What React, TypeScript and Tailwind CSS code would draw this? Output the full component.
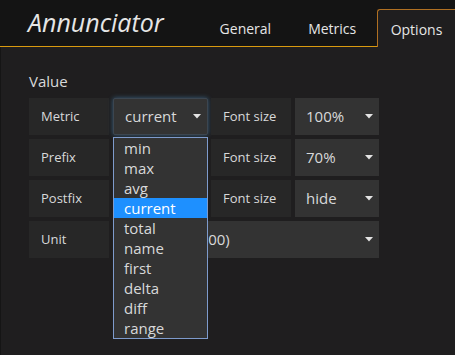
import React from 'react';

const options = ['min', 'max', 'avg', 'current', 'total', 'name', 'first', 'delta', 'diff', 'range'];

function Caret() {
  return (
    <svg width="8" height="5" viewBox="0 0 8 5" className="shrink-0">
      <path d="M0 0 L8 0 L4 4.5 Z" fill="#e4e4e4" />
    </svg>
  );
}

function Label({ text }: { text: string }) {
  return (
    <div className="flex h-full w-[80px] shrink-0 items-center bg-[#272727] pl-[12px] text-[13px] text-[#d8d9da]">
      {text}
    </div>
  );
}

function Select({
  value,
  width,
  focused = false,
}: {
  value: string;
  width: string;
  focused?: boolean;
}) {
  return (
    <div
      className={`flex h-full shrink-0 items-center justify-between bg-[#333333] pl-[11px] pr-[6px] text-[15px] text-[#d8d9da] ${width} ${
        focused ? 'rounded-[2px] border border-[#3c4650] shadow-[0_0_5px_rgba(82,168,236,0.45)]' : ''
      }`}
    >
      <span>{value}</span>
      <Caret />
    </div>
  );
}

function Row({ label, value, size, focused }: { label: string; value: string; size: string; focused?: boolean }) {
  return (
    <div className="flex h-[37px] gap-[4px]">
      <Label text={label} />
      <div className="flex h-full gap-[3px]">
        <Select value={value} width="w-[95px]" focused={focused} />
        <Label text="Font size" />
      </div>
      <Select value={size} width="w-[84px]" />
    </div>
  );
}

export default function App() {
  return (
    <div
      className="relative h-[355px] w-[455px] overflow-hidden bg-[#1f1e1f]"
      style={{ fontFamily: '"Open Sans", "Noto Sans", sans-serif' }}
    >
      {/* header */}
      <div className="flex h-[47px] bg-[#141414]">
        <div className="flex flex-1 items-end border-b border-[#d99a0f]">
          <div className="mb-[11px] ml-[28px] text-[25px] italic leading-none text-[#e6e6e6]">Annunciator</div>
          <div className="mb-[10px] ml-[56px] text-[14px] leading-none text-[#e6e6e6]">General</div>
          <div className="mb-[10px] ml-[37px] text-[14px] leading-none text-[#e6e6e6]">Metrics</div>
        </div>
        <div className="mt-[9px] flex w-[78px] items-center justify-center rounded-tl-[3px] border-l border-t border-[#b07022] bg-[#1f1e1f] pt-[2px] text-[14px] text-[#e6e6e6]">
          Options
        </div>
      </div>

      {/* body */}
      <div className="flex h-[308px] flex-col border-l border-[#151515] pl-[28px]">
        <div className="mt-[27px] text-[15px] leading-none text-[#d8d9da]">Value</div>
        <div className="mt-[9px] flex flex-col gap-[4px]">
          <Row label="Metric" value="current" size="100%" focused />
          <Row label="Prefix" value="" size="70%" />
          <Row label="Postfix" value="" size="hide" />
          <div className="flex h-[37px] gap-[4px]">
            <Label text="Unit" />
            <Select value="percent (0-100)" width="w-[266px]" />
          </div>
        </div>
      </div>

      {/* open dropdown list */}
      <div className="absolute left-[113px] top-[137px] w-[95px] border border-[#7e9bcc] bg-[#333333] text-[15px] text-[#d8d9da]">
        {options.map((o) => (
          <div
            key={o}
            className={`flex h-[20px] items-center pl-[10px] leading-none ${o === 'current' ? 'bg-[#1e90ff] text-white' : ''}`}
          >
            {o}
          </div>
        ))}
      </div>
    </div>
  );
}
